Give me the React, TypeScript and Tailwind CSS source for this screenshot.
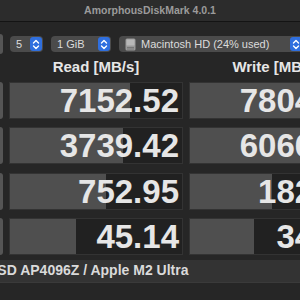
const rows = [
  { read: "7152.52", readPct: 69.5, write: "7804.21", writePct: 100 },
  { read: "3739.42", readPct: 65.5, write: "6066.30", writePct: 100 },
  { read: "752.95", readPct: 55.7, write: "182.38", writePct: 47.7 },
  { read: "45.14", readPct: 38.5, write: "34.92", writePct: 37.4 },
];

function Stepper() {
  return (
    <div className="flex h-full w-[12px] shrink-0 items-center justify-center rounded-[3px] bg-[#2f6fdf]">
      <svg width="8" height="11" viewBox="0 0 8 11" fill="none" stroke="#ffffff" strokeWidth="1.4" strokeLinecap="round" strokeLinejoin="round">
        <path d="M1.5 4 L4 1.5 L6.5 4" />
        <path d="M1.5 7 L4 9.5 L6.5 7" />
      </svg>
    </div>
  );
}

function Popup({ children, width }: { children: React.ReactNode; width: string }) {
  return (
    <div className={`flex h-[16px] shrink-0 items-center justify-between rounded-[4px] bg-[#4b4b4b] py-[1px] pl-[6px] pr-[1px] ${width}`}>
      <div className="flex min-w-0 items-center gap-[4px] whitespace-nowrap text-[11px] leading-none text-[#dcdcdc]">{children}</div>
      <Stepper />
    </div>
  );
}

function DiskIcon() {
  return (
    <svg width="11" height="13" viewBox="0 0 11 13" className="shrink-0">
      <rect x="0.5" y="0.5" width="10" height="12" rx="1.5" fill="#9a9a9a" />
      <rect x="1.5" y="1.5" width="8" height="6" rx="0.5" fill="#b8b8b8" />
      <path d="M2 9.5 H9 M2 11 H9" stroke="#6e6e6e" strokeWidth="0.8" />
    </svg>
  );
}

function Cell({ value, pct }: { value: string; pct: number }) {
  return (
    <div className="relative h-full w-[174px] shrink-0 border border-[#333333] bg-[#212121]">
      <div className="absolute inset-y-0 left-0 bg-[#4f4f4f]" style={{ width: `${pct}%` }} />
      <div className="relative flex h-full items-center justify-end pr-[3px] text-[33px] font-bold leading-none text-[#e6e6e6]">
        {value}
      </div>
    </div>
  );
}

export default function App() {
  return (
    <div className="h-[300px] w-[300px] overflow-hidden bg-[#262626] font-['Liberation_Sans',Arial,sans-serif]">
      <div className="flex h-[22px] items-center justify-center border-b border-[#141414] bg-[#2c2c2c] text-[10.5px] font-bold text-[#9b9b9b]">
        AmorphousDiskMark 4.0.1
      </div>

      <div className="mt-[14px] flex h-[16px] items-center">
        <div className="h-[20px] w-[3px] shrink-0 rounded-r-[3px] bg-[#555555]" />
        <div className="ml-[7px] flex gap-[8px]">
          <Popup width="w-[33px]">5</Popup>
          <Popup width="w-[60px]">1 GiB</Popup>
          <Popup width="w-[184px]">
            <DiskIcon />
            <span className="ml-[1px]">Macintosh HD (24% used)</span>
          </Popup>
        </div>
      </div>

      <div className="mt-[4px] flex h-[22px] items-center whitespace-nowrap">
        <div className="w-[9px] shrink-0" />
        <div className="w-[174px] shrink-0 text-center text-[15px] font-bold text-[#e6e6e6]">Read [MB/s]</div>
        <div className="w-[6px] shrink-0" />
        <div className="w-[174px] shrink-0 text-center text-[15px] font-bold text-[#e6e6e6]">Write [MB/s]</div>
      </div>

      <div className="mt-[4px] flex flex-col gap-[8.3px]">
        {rows.map((r, i) => (
          <div key={i} className="flex h-[37px] items-stretch">
            <div className="w-[3px] shrink-0 rounded-r-[3px] bg-[#555555]" />
            <div className="w-[6px] shrink-0" />
            <Cell value={r.read} pct={r.readPct} />
            <div className="w-[6px] shrink-0" />
            <Cell value={r.write} pct={r.writePct} />
          </div>
        ))}
      </div>

      <div className="mt-[5px] flex h-[23px] items-center border-b border-[#3a3a3a] bg-[#333333]">
        <span className="ml-[-12px] whitespace-nowrap text-[14px] font-bold text-[#dadada]">
          SSD AP4096Z / Apple M2 Ultra
        </span>
      </div>
    </div>
  );
}
